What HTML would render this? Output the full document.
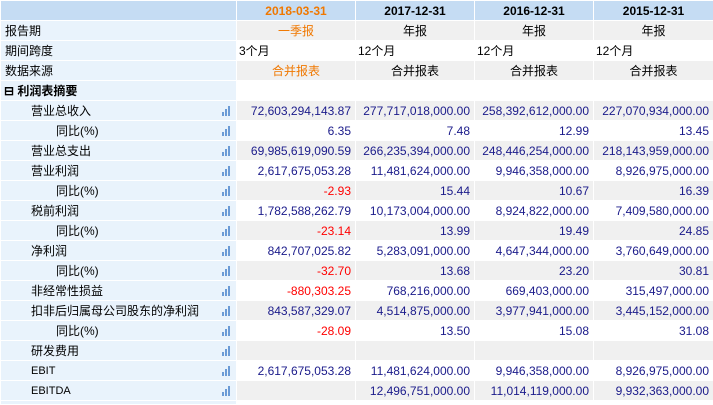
<!DOCTYPE html>
<html><head><meta charset="utf-8"><style>
*{margin:0;padding:0;box-sizing:border-box}
body{width:713px;height:403px;overflow:hidden;background:#fff;font-family:"Liberation Sans","Noto Sans CJK SC",sans-serif;font-size:12px;color:#000}
table{border-collapse:collapse;table-layout:fixed;width:713px}
td{height:20px;border:1px solid #fff;padding:0 4px;white-space:nowrap;overflow:hidden;line-height:18px}
tr.h td{background:#c5dcf3;font-weight:bold;text-align:center;font-size:12px;height:20px}
td.l{background:#e9f3fc;position:relative}
tr.g td.d{background:#f0f0f0}
td.d{text-align:right;color:#1a1a8a}
td.c{text-align:center}
td.o,tr.h td.o{color:#f07800}
td.r{color:#ff0000}
td.k{color:#000}
.bar{position:absolute;right:4px;top:5px;width:10px;height:10px}
.bar i{position:absolute;bottom:0;width:2px;background:#6b9bd6}
</style></head><body>
<table>
<colgroup><col style="width:236px"><col style="width:119px"><col style="width:119px"><col style="width:119px"><col style="width:120px"></colgroup>
<tr class="h"><td></td><td class="o">2018-03-31</td><td>2017-12-31</td><td>2016-12-31</td><td>2015-12-31</td></tr>
<tr class="g"><td class="l">报告期</td><td class="d c o">一季报</td><td class="d c k">年报</td><td class="d c k">年报</td><td class="d c k">年报</td></tr>
<tr><td class="l">期间跨度</td><td class="d k" style="text-align:left;padding-left:2px">3个月</td><td class="d k" style="text-align:left;padding-left:2px">12个月</td><td class="d k" style="text-align:left;padding-left:2px">12个月</td><td class="d k" style="text-align:left;padding-left:2px">12个月</td></tr>
<tr class="g"><td class="l">数据来源</td><td class="d c o">合并报表</td><td class="d c k">合并报表</td><td class="d c k">合并报表</td><td class="d c k">合并报表</td></tr>
<tr><td class="l" style="font-weight:bold;padding-left:3px">⊟ 利润表摘要</td><td class="d"></td><td class="d"></td><td class="d"></td><td class="d"></td></tr>
<tr class="g"><td class="l" style="padding-left:30px">营业总收入<span class="bar"><i style="left:0;height:4px"></i><i style="left:3px;height:7px"></i><i style="left:6px;height:10px"></i></span></td><td class="d">72,603,294,143.87</td><td class="d">277,717,018,000.00</td><td class="d">258,392,612,000.00</td><td class="d">227,070,934,000.00</td></tr>
<tr><td class="l" style="padding-left:55px">同比(%)<span class="bar"><i style="left:0;height:4px"></i><i style="left:3px;height:7px"></i><i style="left:6px;height:10px"></i></span></td><td class="d">6.35</td><td class="d">7.48</td><td class="d">12.99</td><td class="d">13.45</td></tr>
<tr class="g"><td class="l" style="padding-left:30px">营业总支出<span class="bar"><i style="left:0;height:4px"></i><i style="left:3px;height:7px"></i><i style="left:6px;height:10px"></i></span></td><td class="d">69,985,619,090.59</td><td class="d">266,235,394,000.00</td><td class="d">248,446,254,000.00</td><td class="d">218,143,959,000.00</td></tr>
<tr><td class="l" style="padding-left:30px">营业利润<span class="bar"><i style="left:0;height:4px"></i><i style="left:3px;height:7px"></i><i style="left:6px;height:10px"></i></span></td><td class="d">2,617,675,053.28</td><td class="d">11,481,624,000.00</td><td class="d">9,946,358,000.00</td><td class="d">8,926,975,000.00</td></tr>
<tr class="g"><td class="l" style="padding-left:55px">同比(%)<span class="bar"><i style="left:0;height:4px"></i><i style="left:3px;height:7px"></i><i style="left:6px;height:10px"></i></span></td><td class="d r">-2.93</td><td class="d">15.44</td><td class="d">10.67</td><td class="d">16.39</td></tr>
<tr><td class="l" style="padding-left:30px">税前利润<span class="bar"><i style="left:0;height:4px"></i><i style="left:3px;height:7px"></i><i style="left:6px;height:10px"></i></span></td><td class="d">1,782,588,262.79</td><td class="d">10,173,004,000.00</td><td class="d">8,924,822,000.00</td><td class="d">7,409,580,000.00</td></tr>
<tr class="g"><td class="l" style="padding-left:55px">同比(%)<span class="bar"><i style="left:0;height:4px"></i><i style="left:3px;height:7px"></i><i style="left:6px;height:10px"></i></span></td><td class="d r">-23.14</td><td class="d">13.99</td><td class="d">19.49</td><td class="d">24.85</td></tr>
<tr><td class="l" style="padding-left:30px">净利润<span class="bar"><i style="left:0;height:4px"></i><i style="left:3px;height:7px"></i><i style="left:6px;height:10px"></i></span></td><td class="d">842,707,025.82</td><td class="d">5,283,091,000.00</td><td class="d">4,647,344,000.00</td><td class="d">3,760,649,000.00</td></tr>
<tr class="g"><td class="l" style="padding-left:55px">同比(%)<span class="bar"><i style="left:0;height:4px"></i><i style="left:3px;height:7px"></i><i style="left:6px;height:10px"></i></span></td><td class="d r">-32.70</td><td class="d">13.68</td><td class="d">23.20</td><td class="d">30.81</td></tr>
<tr><td class="l" style="padding-left:30px">非经常性损益<span class="bar"><i style="left:0;height:4px"></i><i style="left:3px;height:7px"></i><i style="left:6px;height:10px"></i></span></td><td class="d r">-880,303.25</td><td class="d">768,216,000.00</td><td class="d">669,403,000.00</td><td class="d">315,497,000.00</td></tr>
<tr class="g"><td class="l" style="padding-left:30px">扣非后归属母公司股东的净利润<span class="bar"><i style="left:0;height:4px"></i><i style="left:3px;height:7px"></i><i style="left:6px;height:10px"></i></span></td><td class="d">843,587,329.07</td><td class="d">4,514,875,000.00</td><td class="d">3,977,941,000.00</td><td class="d">3,445,152,000.00</td></tr>
<tr><td class="l" style="padding-left:55px">同比(%)<span class="bar"><i style="left:0;height:4px"></i><i style="left:3px;height:7px"></i><i style="left:6px;height:10px"></i></span></td><td class="d r">-28.09</td><td class="d">13.50</td><td class="d">15.08</td><td class="d">31.08</td></tr>
<tr class="g"><td class="l" style="padding-left:30px">研发费用<span class="bar"><i style="left:0;height:4px"></i><i style="left:3px;height:7px"></i><i style="left:6px;height:10px"></i></span></td><td class="d"></td><td class="d"></td><td class="d"></td><td class="d"></td></tr>
<tr><td class="l" style="padding-left:30px;font-size:11px">EBIT<span class="bar"><i style="left:0;height:4px"></i><i style="left:3px;height:7px"></i><i style="left:6px;height:10px"></i></span></td><td class="d">2,617,675,053.28</td><td class="d">11,481,624,000.00</td><td class="d">9,946,358,000.00</td><td class="d">8,926,975,000.00</td></tr>
<tr class="g"><td class="l" style="padding-left:30px;font-size:11px">EBITDA<span class="bar"><i style="left:0;height:4px"></i><i style="left:3px;height:7px"></i><i style="left:6px;height:10px"></i></span></td><td class="d"></td><td class="d">12,496,751,000.00</td><td class="d">11,014,119,000.00</td><td class="d">9,932,363,000.00</td></tr>
<tr><td class="l" style="height:4px"></td><td class="d" style="height:4px"></td><td class="d" style="height:4px"></td><td class="d" style="height:4px"></td><td class="d" style="height:4px"></td></tr>
</table>
</body></html>
